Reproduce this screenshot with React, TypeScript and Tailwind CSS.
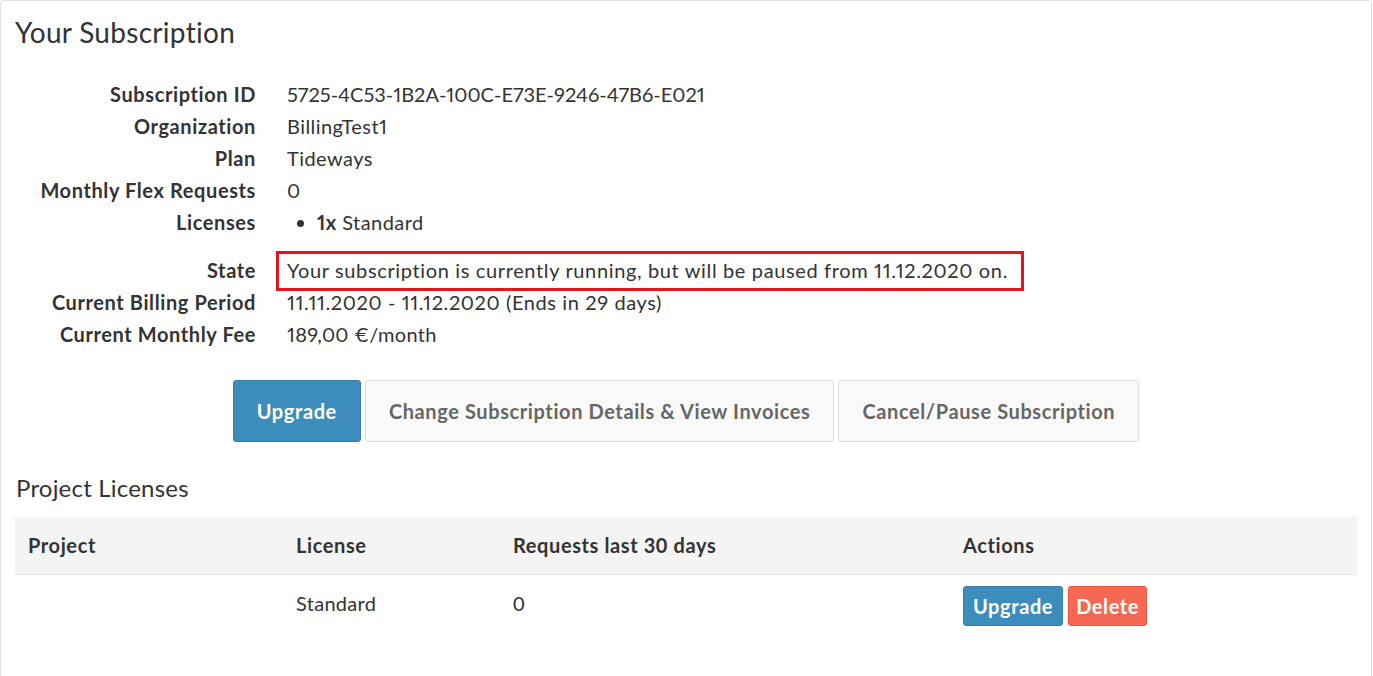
import React from 'react'

const font = { fontFamily: 'Lato, "Liberation Sans", sans-serif' }

const rows: { label: string; value: React.ReactNode; tracking: string }[] = [
  { label: 'Subscription ID', value: '5725-4C53-1B2A-100C-E73E-9246-47B6-E021', tracking: 'tracking-[0px]' },
  { label: 'Organization', value: 'BillingTest1', tracking: 'tracking-[0.45px]' },
  { label: 'Plan', value: 'Tideways', tracking: 'tracking-[0.45px]' },
  { label: 'Monthly Flex Requests', value: '0', tracking: 'tracking-[0.45px]' },
]

function Row({ label, children, className = '', tracking = 'tracking-[0.45px]' }: { label: string; children: React.ReactNode; className?: string; tracking?: string }) {
  return (
    <div className={`flex h-8 items-center ${className}`}>
      <div className="w-[255px] shrink-0 text-right font-bold tracking-[0.6px] text-[#333]">{label}</div>
      <div className={`pl-[31px] text-[#333] proportional-nums ${tracking}`}>{children}</div>
    </div>
  )
}

export default function App() {
  return (
    <div className="min-h-screen bg-white" style={font}>
      <div className="h-[720px] w-[1372px] rounded-t-[4px] border border-[#e2e2e2]">
        {/* Header */}
        <h1 className="pl-[14px] pt-[12px] text-[28px] leading-[38px] font-normal tracking-[0.3px] text-[#333]">Your Subscription</h1>

        {/* Details */}
        <div className="mt-[27px] text-[20px]">
          {rows.map((r) => (
            <Row key={r.label} label={r.label} tracking={r.tracking}>{r.value}</Row>
          ))}
          <Row label="Licenses">
            <ul className="list-disc pl-[30px]">
              <li><span className="font-bold">1x</span> Standard</li>
            </ul>
          </Row>
          <Row label="State" className="mt-4" tracking="tracking-[0.64px]">
            <span className="relative inline-block leading-[32px]">
              Your subscription is currently running, but will be paused from 11.12.2020 on.
              <span className="absolute -top-[3px] -right-[16px] -bottom-[5px] -left-[11px] border-[3px] border-[#e8141c]" />
            </span>
          </Row>
          <Row label="Current Billing Period" tracking="tracking-[0.6px]">11.11.2020 - 11.12.2020 (Ends in 29 days)</Row>
          <Row label="Current Monthly Fee" tracking="tracking-[0.3px]">189,00 €/month</Row>
        </div>

        {/* Actions */}
        <div className="mt-[30px] flex justify-center gap-[4px] text-[20px] font-bold tracking-[0.6px]">
          <button className="h-[62px] rounded-[3px] border border-[#367fa9] bg-[#3c8dbc] px-[23px] text-white">Upgrade</button>
          <button className="h-[62px] rounded-[3px] border border-[#dedede] bg-[#f9f9f9] px-[23px] text-[#666]">Change Subscription Details &amp; View Invoices</button>
          <button className="h-[62px] rounded-[3px] border border-[#dedede] bg-[#f9f9f9] px-[23px] text-[#666]">Cancel/Pause Subscription</button>
        </div>

        {/* Project Licenses */}
        <h2 className="mt-[31px] pl-[15px] text-[24px] leading-[30px] font-normal tracking-[0.2px] text-[#333]">Project Licenses</h2>
        <table className="mt-[14px] ml-[14px] w-[1343px] border-collapse text-left text-[20px] tracking-[0.3px] text-[#333]">
          <thead>
            <tr className="h-[57px] border-b border-[#ececec] bg-[#f4f4f4]">
              <th className="w-[269px] pl-[13px] font-bold tracking-[0.6px]">Project</th>
              <th className="w-[217px] pl-[12px] font-bold tracking-[0.6px]">License</th>
              <th className="w-[450px] pl-[12px] font-bold tracking-[0.6px]">Requests last 30 days</th>
              <th className="pl-[12px] font-bold tracking-[0.6px]">Actions</th>
            </tr>
          </thead>
          <tbody>
            <tr className="h-[58px]">
              <td className="pl-[13px]"></td>
              <td className="pl-[12px]">Standard</td>
              <td className="pl-[12px]">0</td>
              <td className="pl-[12px]">
                <div className="flex gap-[5px] pt-[5px] font-bold tracking-[0.6px]">
                  <button className="h-[40px] rounded-[3px] border border-[#367fa9] bg-[#3c8dbc] px-[9px] text-white">Upgrade</button>
                  <button className="h-[40px] rounded-[3px] border border-[#f4543c] bg-[#f56954] px-[7px] text-white">Delete</button>
                </div>
              </td>
            </tr>
          </tbody>
        </table>
      </div>
    </div>
  )
}
